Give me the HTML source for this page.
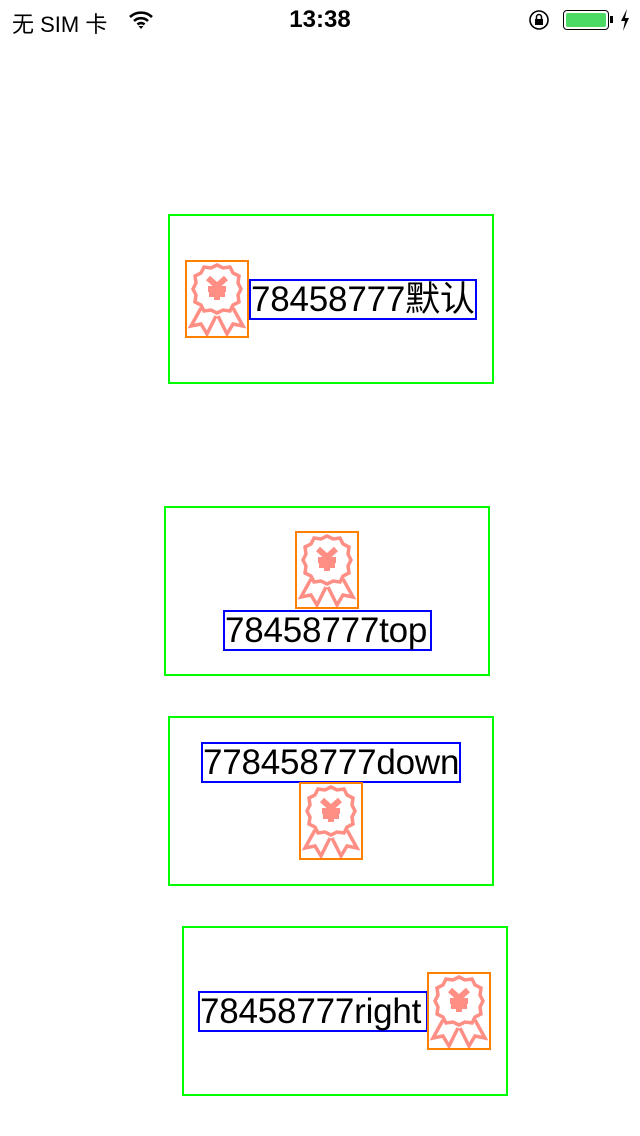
<!DOCTYPE html><html><head><meta charset="utf-8"><style>
body{margin:0;width:640px;height:1136px;background:#fff;position:relative;overflow:hidden;font-family:"Liberation Sans","Noto Sans CJK SC",sans-serif}
.a{position:absolute;box-sizing:border-box}
.g{border:2px solid #00ff00}
.o{border:2px solid #ff7f00}
.b{border:2px solid #0000ff;font-size:35px;line-height:37px;color:#000;white-space:nowrap;overflow:visible;text-align:left;padding-left:0;letter-spacing:-0.2px}
.o svg{position:absolute;left:0;top:0}
</style></head><body>
<div class="a" style="left:12px;top:7px;font-size:22px;">无 SIM 卡</div>
<svg class="a" style="left:128px;top:10px" width="26" height="20" viewBox="0 0 26 20"><path d="M2 7a16 16 0 0 1 22 0M6 11a10 10 0 0 1 14 0M9.5 14.5a5 5 0 0 1 7 0" stroke="#000" stroke-width="2.6" fill="none"/><path d="M13 19l-2.5-3h5z" fill="#000"/></svg>
<div class="a" style="left:0;width:640px;top:6px;text-align:center;font-size:24px;font-weight:bold">13:38</div>
<svg class="a" style="left:528px;top:9px" width="22" height="22" viewBox="0 0 22 22"><circle cx="11" cy="11" r="9" stroke="#000" stroke-width="1.6" fill="none"/><rect x="7" y="10" width="8" height="6" fill="#000"/><path d="M8.5 10V8a2.5 2.5 0 0 1 5 0v2" stroke="#000" stroke-width="1.5" fill="none"/></svg>
<div class="a" style="left:563px;top:10px;width:46px;height:20px;border:1.5px solid #000;border-radius:4px;padding:2px"><div style="background:#4cd964;width:100%;height:100%;border-radius:2px"></div></div>
<div class="a" style="left:610px;top:16px;width:3px;height:7px;background:#000"></div>
<svg class="a" style="left:620px;top:9px" width="10" height="22" viewBox="0 0 10 22"><path d="M7 0L1 12h4l-2 10 6-13H5z" fill="#000"/></svg>

<svg width="0" height="0" style="position:absolute"><defs><g id="ic"><path d="M30 3l6 3 7-1 3 6 6 3-1 7 3 6-3 6 1 7-6 3-3 6-7-1-6 3-6-3-7 1-3-6-6-3 1-7-3-6 3-6-1-7 6-3 3-6 7 1z" fill="none" stroke="#ff8e85" stroke-width="3.5"/><path d="M21 16l9 8 9-8M30 24v14M21 27h18M22 32h16" stroke="#ff8e85" stroke-width="6" fill="none"/><path d="M14 46l-10 18 10-2 6 10 9-18M46 46l10 18-10-2-6 10-9-18" fill="none" stroke="#ff8e85" stroke-width="3.5"/></g></defs></svg>

<div class="a g" style="left:168px;top:214px;width:326px;height:170px"></div>
<div class="a o" style="left:185px;top:260px;width:64px;height:78px"><svg width="60" height="74" viewBox="0 0 60 74"><use href="#ic"/></svg></div>
<div class="a b" style="left:249px;top:279px;width:228px;height:41px">78458777默认</div>

<div class="a g" style="left:164px;top:506px;width:326px;height:170px"></div>
<div class="a o" style="left:295px;top:531px;width:64px;height:78px"><svg width="60" height="74" viewBox="0 0 60 74"><use href="#ic"/></svg></div>
<div class="a b" style="left:223px;top:610px;width:209px;height:41px">78458777top</div>

<div class="a g" style="left:168px;top:716px;width:326px;height:170px"></div>
<div class="a b" style="left:201px;top:742px;width:260px;height:41px">778458777down</div>
<div class="a o" style="left:299px;top:782px;width:64px;height:78px"><svg width="60" height="74" viewBox="0 0 60 74"><use href="#ic"/></svg></div>

<div class="a g" style="left:182px;top:926px;width:326px;height:170px"></div>
<div class="a b" style="left:198px;top:991px;width:230px;height:41px">78458777right</div>
<div class="a o" style="left:427px;top:972px;width:64px;height:78px"><svg width="60" height="74" viewBox="0 0 60 74"><use href="#ic"/></svg></div>
</body></html>
